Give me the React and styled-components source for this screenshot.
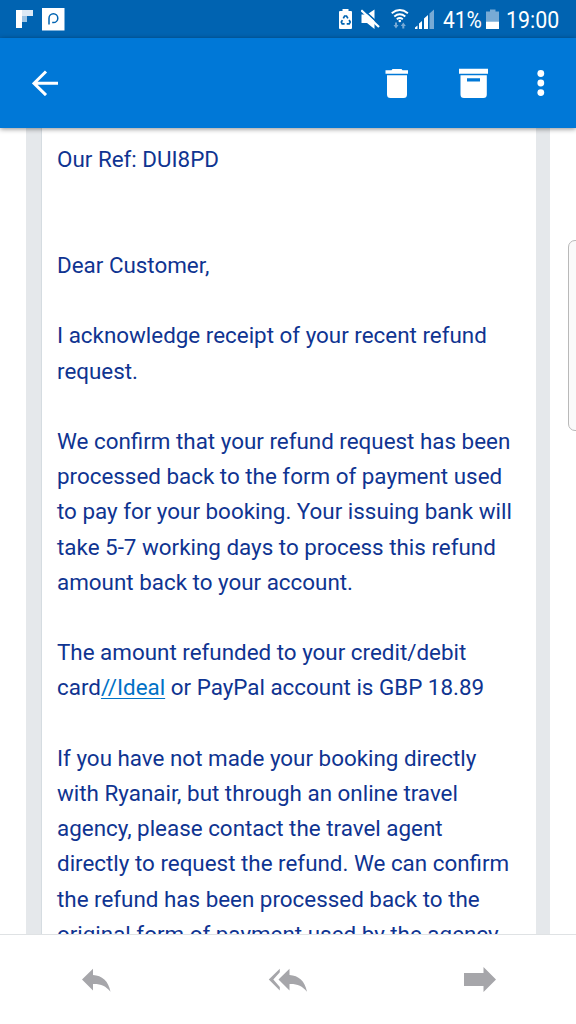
import React from "react";
import styled, { createGlobalStyle } from "styled-components";

const GlobalStyle = createGlobalStyle`
  body {
    margin: 0;
    background: #fff;
    font-family: Roboto, "Noto Sans", sans-serif;
  }
`;

const Screen = styled.div`
  width: 576px;
  height: 1024px;
  display: flex;
  flex-direction: column;
  overflow: hidden;
  position: relative;
`;

const StatusBar = styled.header`
  flex: none;
  height: 38px;
  background: #0063b1;
  color: #fff;
  display: flex;
  align-items: flex-start;
  padding: 8px 0 0 16px;
  box-sizing: border-box;
`;

const Glyph = styled.svg`
  flex: none;
  display: block;
  width: ${({ $w }) => $w}px;
  height: ${({ $h }) => $h}px;
  margin-left: ${({ $gap = 0 }) => $gap}px;
`;

const StatusText = styled.span`
  width: ${({ $w }) => $w}px;
  margin-left: ${({ $gap }) => $gap}px;
  font-size: 23.5px;
  line-height: 25px;
  white-space: nowrap;
  transform: scaleX(${({ $squeeze }) => $squeeze});
  transform-origin: left;
`;

const Toolbar = styled.nav`
  flex: none;
  height: 90px;
  background: #0078d7;
  display: flex;
  align-items: center;
  padding-left: 32px;
  box-sizing: border-box;
  box-shadow: 0 1px 5px rgba(0, 0, 0, 0.45);
  z-index: 1;
`;

const IconButton = styled.button`
  flex: none;
  border: 0;
  padding: 0;
  background: none;
  margin-left: ${({ $gap = 0 }) => $gap}px;
`;

const Content = styled.main`
  flex: none;
  height: 806px;
  overflow: hidden;
  padding: 0 26px;
`;

const Sheet = styled.section`
  height: 100%;
  border: solid #e5e8eb;
  border-width: 0 14px 0 15px;
`;

const Letter = styled.article`
  height: 100%;
  box-sizing: border-box;
  border-left: 1px solid #d5dce1;
  padding: 14.4px 0 0 15px;
  color: #0f3491;
  font-size: 22.4px;
  line-height: 35.2px;
  white-space: nowrap;

  p {
    margin: 0 0 35.2px;
  }

  p:first-child {
    margin-bottom: 70.4px;
  }

  a {
    color: #0072c6;
    text-decoration: underline;
    text-decoration-thickness: 1px;
    text-underline-offset: 3px;
  }
`;

const ScrollHandle = styled.div`
  position: absolute;
  left: 568px;
  top: 240px;
  width: 20px;
  height: 189px;
  border: 1px solid #b9b9b9;
  border-radius: 7px;
  background: #fafafa;
`;

const ReplyBar = styled.footer`
  flex: 1;
  border-top: 1px solid #dfe2e4;
  display: flex;
  align-items: center;
  padding-left: 81px;
  background: #fff;
`;

const FlipIcon = () => (
  <Glyph $w={18} $h={23} viewBox="16 8 18 23">
    <path fill="#fff" d="M16 10h6v18h-6z" />
    <path fill="#dce9f5" d="M22 10h11v6H22z" />
    <path fill="#9cc3e3" d="M22 16h5v6h-5z" />
  </Glyph>
);

const ParkIcon = () => (
  <Glyph $w={23} $h={23} $gap={8} viewBox="42 8 23 23">
    <path fill="#fff" d="M42 8h22.5v22.5H42z" />
    <path
      fill="none"
      stroke="#0063b1"
      strokeWidth="1.5"
      d="M49 24.5V18.2a4.4 4.4 0 1 1 4.4 4.4h-1.2"
    />
  </Glyph>
);

const RecycleBatteryIcon = () => (
  <Glyph $w={14} $h={22} viewBox="339 8 14 22">
    <path
      fill="#fff"
      d="M342.500 9h6v2h2.500q1 0 1 1v16q0 1-1 1h-11q-1 0-1-1V12q0-1 1-1h2.500z"
    />
    <g fill="none" stroke="#0063b1" strokeWidth="1.700">
      <path d="M343.300 18.300l1.300-2.300h1.900l1.400 2.400" />
      <path d="M349.100 20l1.100 2-1 1.900h-2.500" />
      <path d="M344.600 23.900h-2.400l-.9-1.800 1.100-2" />
    </g>
  </Glyph>
);

const MuteIcon = () => (
  <Glyph $w={20} $h={22} $gap={8} viewBox="361 8 20 22">
    <path fill="#fff" d="M361.500 14.500h5.500L374.500 9.500V29l-7.500-6h-5.500z" />
    <path stroke="#0063b1" strokeWidth="1.600" d="M362.500 8.800l18 16.500" />
    <path stroke="#fff" strokeWidth="2.200" d="M361.300 10.200l17.700 16.800" />
  </Glyph>
);

const WifiIcon = () => (
  <Glyph $w={18} $h={22} $gap={10} viewBox="391.500 8 18 22">
    <g fill="none" stroke="#fff" strokeWidth="1.900">
      <path d="M392.200 13.200q8.100-6.500 16.200 0" />
      <path d="M394.800 16.500q5.500-4.500 11 0" />
      <path d="M397.300 19.300q3-2.400 6 0" />
    </g>
    <circle cx="400.300" cy="21" r="1.300" fill="#fff" />
    <path
      fill="#77aad5"
      d="M395.500 22.500h2V25h1.500l-2.500 3.500L394 25h1.500zM402.800 28.500h2V26h1.500l-2.500-3.500-2.500 3.500h1.500z"
    />
  </Glyph>
);

const SignalIcon = () => (
  <Glyph $w={20} $h={22} $gap={6} viewBox="416 8 20 22">
    <path
      fill="#fff"
      d="M416 29v-1.500l2.500-2V29zM420 29v-5.500l3-2.500v8zM425 29V18.500l4-3.500v14z"
    />
    <path fill="#77aad5" d="M430.500 29V13.500L435 9.500V29z" />
  </Glyph>
);

const BatteryIcon = () => (
  <Glyph $w={14} $h={22} $gap={4.5} viewBox="486.500 8 14 22">
    <path fill="#77aad5" d="M490.500 9.500h5.500v2h3.500V21.500h-13v-10h4z" />
    <path fill="#fff" d="M486.500 21.500h13V29h-13z" />
  </Glyph>
);

const StatusIcons = styled.div`
  margin-left: auto;
  width: 237px;
  display: flex;
`;

const App = () => {
  return (
    <Screen>
      <GlobalStyle />
      <StatusBar>
        <FlipIcon />
        <ParkIcon />
        <StatusIcons>
          <RecycleBatteryIcon />
          <MuteIcon />
          <WifiIcon />
          <SignalIcon />
          <StatusText $w={39} $gap={7.5} $squeeze={0.89}>
            41%
          </StatusText>
          <BatteryIcon />
          <StatusText $w={54} $gap={5.5} $squeeze={0.91}>
            19:00
          </StatusText>
        </StatusIcons>
      </StatusBar>
      <Toolbar>
        <IconButton aria-label="Back">
          <Glyph $w={26} $h={26} viewBox="32 70 26 26">
            <path
              fill="none"
              stroke="#fff"
              strokeWidth="3"
              d="M46 71.500L34 83.300l12 11.800M34 83.300h24"
            />
          </Glyph>
        </IconButton>
        <IconButton aria-label="Delete" $gap={327}>
          <Glyph $w={24} $h={30} viewBox="385 68 24 30">
            <path
              fill="#fff"
              d="M385.500 70.300h6l1-1.300h9l1 1.300h5.500v3.500h-22.500zM387 75.300h20v19.200q0 3.500-3.500 3.500h-13q-3.500 0-3.500-3.500z"
            />
          </Glyph>
        </IconButton>
        <IconButton aria-label="Archive" $gap={50}>
          <Glyph $w={30} $h={30} viewBox="459 68 30 30">
            <path
              fill="#fff"
              fillRule="evenodd"
              d="M459 68.700h29v5h-29zM460.500 75.300h26.300v19.200q0 3.500-3.500 3.500h-19.300q-3.500 0-3.500-3.500zM467 78.200v3.200h13v-3.200z"
            />
          </Glyph>
        </IconButton>
        <IconButton aria-label="More" $gap={48}>
          <Glyph $w={8} $h={28} viewBox="537 69.300 8 28" fill="#fff">
            <circle cx="540.800" cy="73.800" r="3.400" />
            <circle cx="540.800" cy="83.300" r="3.400" />
            <circle cx="540.800" cy="92.900" r="3.400" />
          </Glyph>
        </IconButton>
      </Toolbar>
      <Content>
        <Sheet>
          <Letter>
            <p>Our Ref: DUI8PD</p>
            <p>Dear Customer,</p>
            <p>
              I acknowledge receipt of your recent refund
              <br />
              request.
            </p>
            <p>
              We confirm that your refund request has been
              <br />
              processed back to the form of payment used
              <br />
              to pay for your booking. Your issuing bank will
              <br />
              take 5-7 working days to process this refund
              <br />
              amount back to your account.
            </p>
            <p>
              The amount refunded to your credit/debit
              <br />
              card<a>//Ideal</a> or PayPal account is GBP 18.89
            </p>
            <p>
              If you have not made your booking directly
              <br />
              with Ryanair, but through an online travel
              <br />
              agency, please contact the travel agent
              <br />
              directly to request the refund. We can confirm
              <br />
              the refund has been processed back to the
              <br />
              original form of payment used by the agency
            </p>
          </Letter>
        </Sheet>
      </Content>
      <ReplyBar>
        <IconButton aria-label="Reply">
          <Glyph $w={30} $h={26} viewBox="81 967 30 26">
            <path
              fill="#a6a6aa"
              d="M82 979.500l11-10.800v6.300c9 .5 15.500 6 17.500 16.800-5-6-9.500-8-17.500-7.800v6.500z"
            />
          </Glyph>
        </IconButton>
        <IconButton aria-label="Reply all" $gap={157}>
          <Glyph $w={40} $h={26} viewBox="268 967 40 26">
            <path
              fill="#a6a6aa"
              d="M268.800 979.500l11-10.800v3.500l-6.500 7.300 6.500 7.500v3.500zM278.500 979.500l11-10.800v6.300c9 .5 15.500 6 17.500 16.800-5-6-9.500-8-17.500-7.800v6.500z"
            />
          </Glyph>
        </IconButton>
        <IconButton aria-label="Forward" $gap={156}>
          <Glyph $w={32} $h={26} viewBox="464 967 32 26">
            <path
              fill="#a6a6aa"
              d="M464 973h19.500v-6l12.500 12.500-12.500 12.500v-6H464z"
            />
          </Glyph>
        </IconButton>
      </ReplyBar>
      <ScrollHandle />
    </Screen>
  );
};

export default App;
